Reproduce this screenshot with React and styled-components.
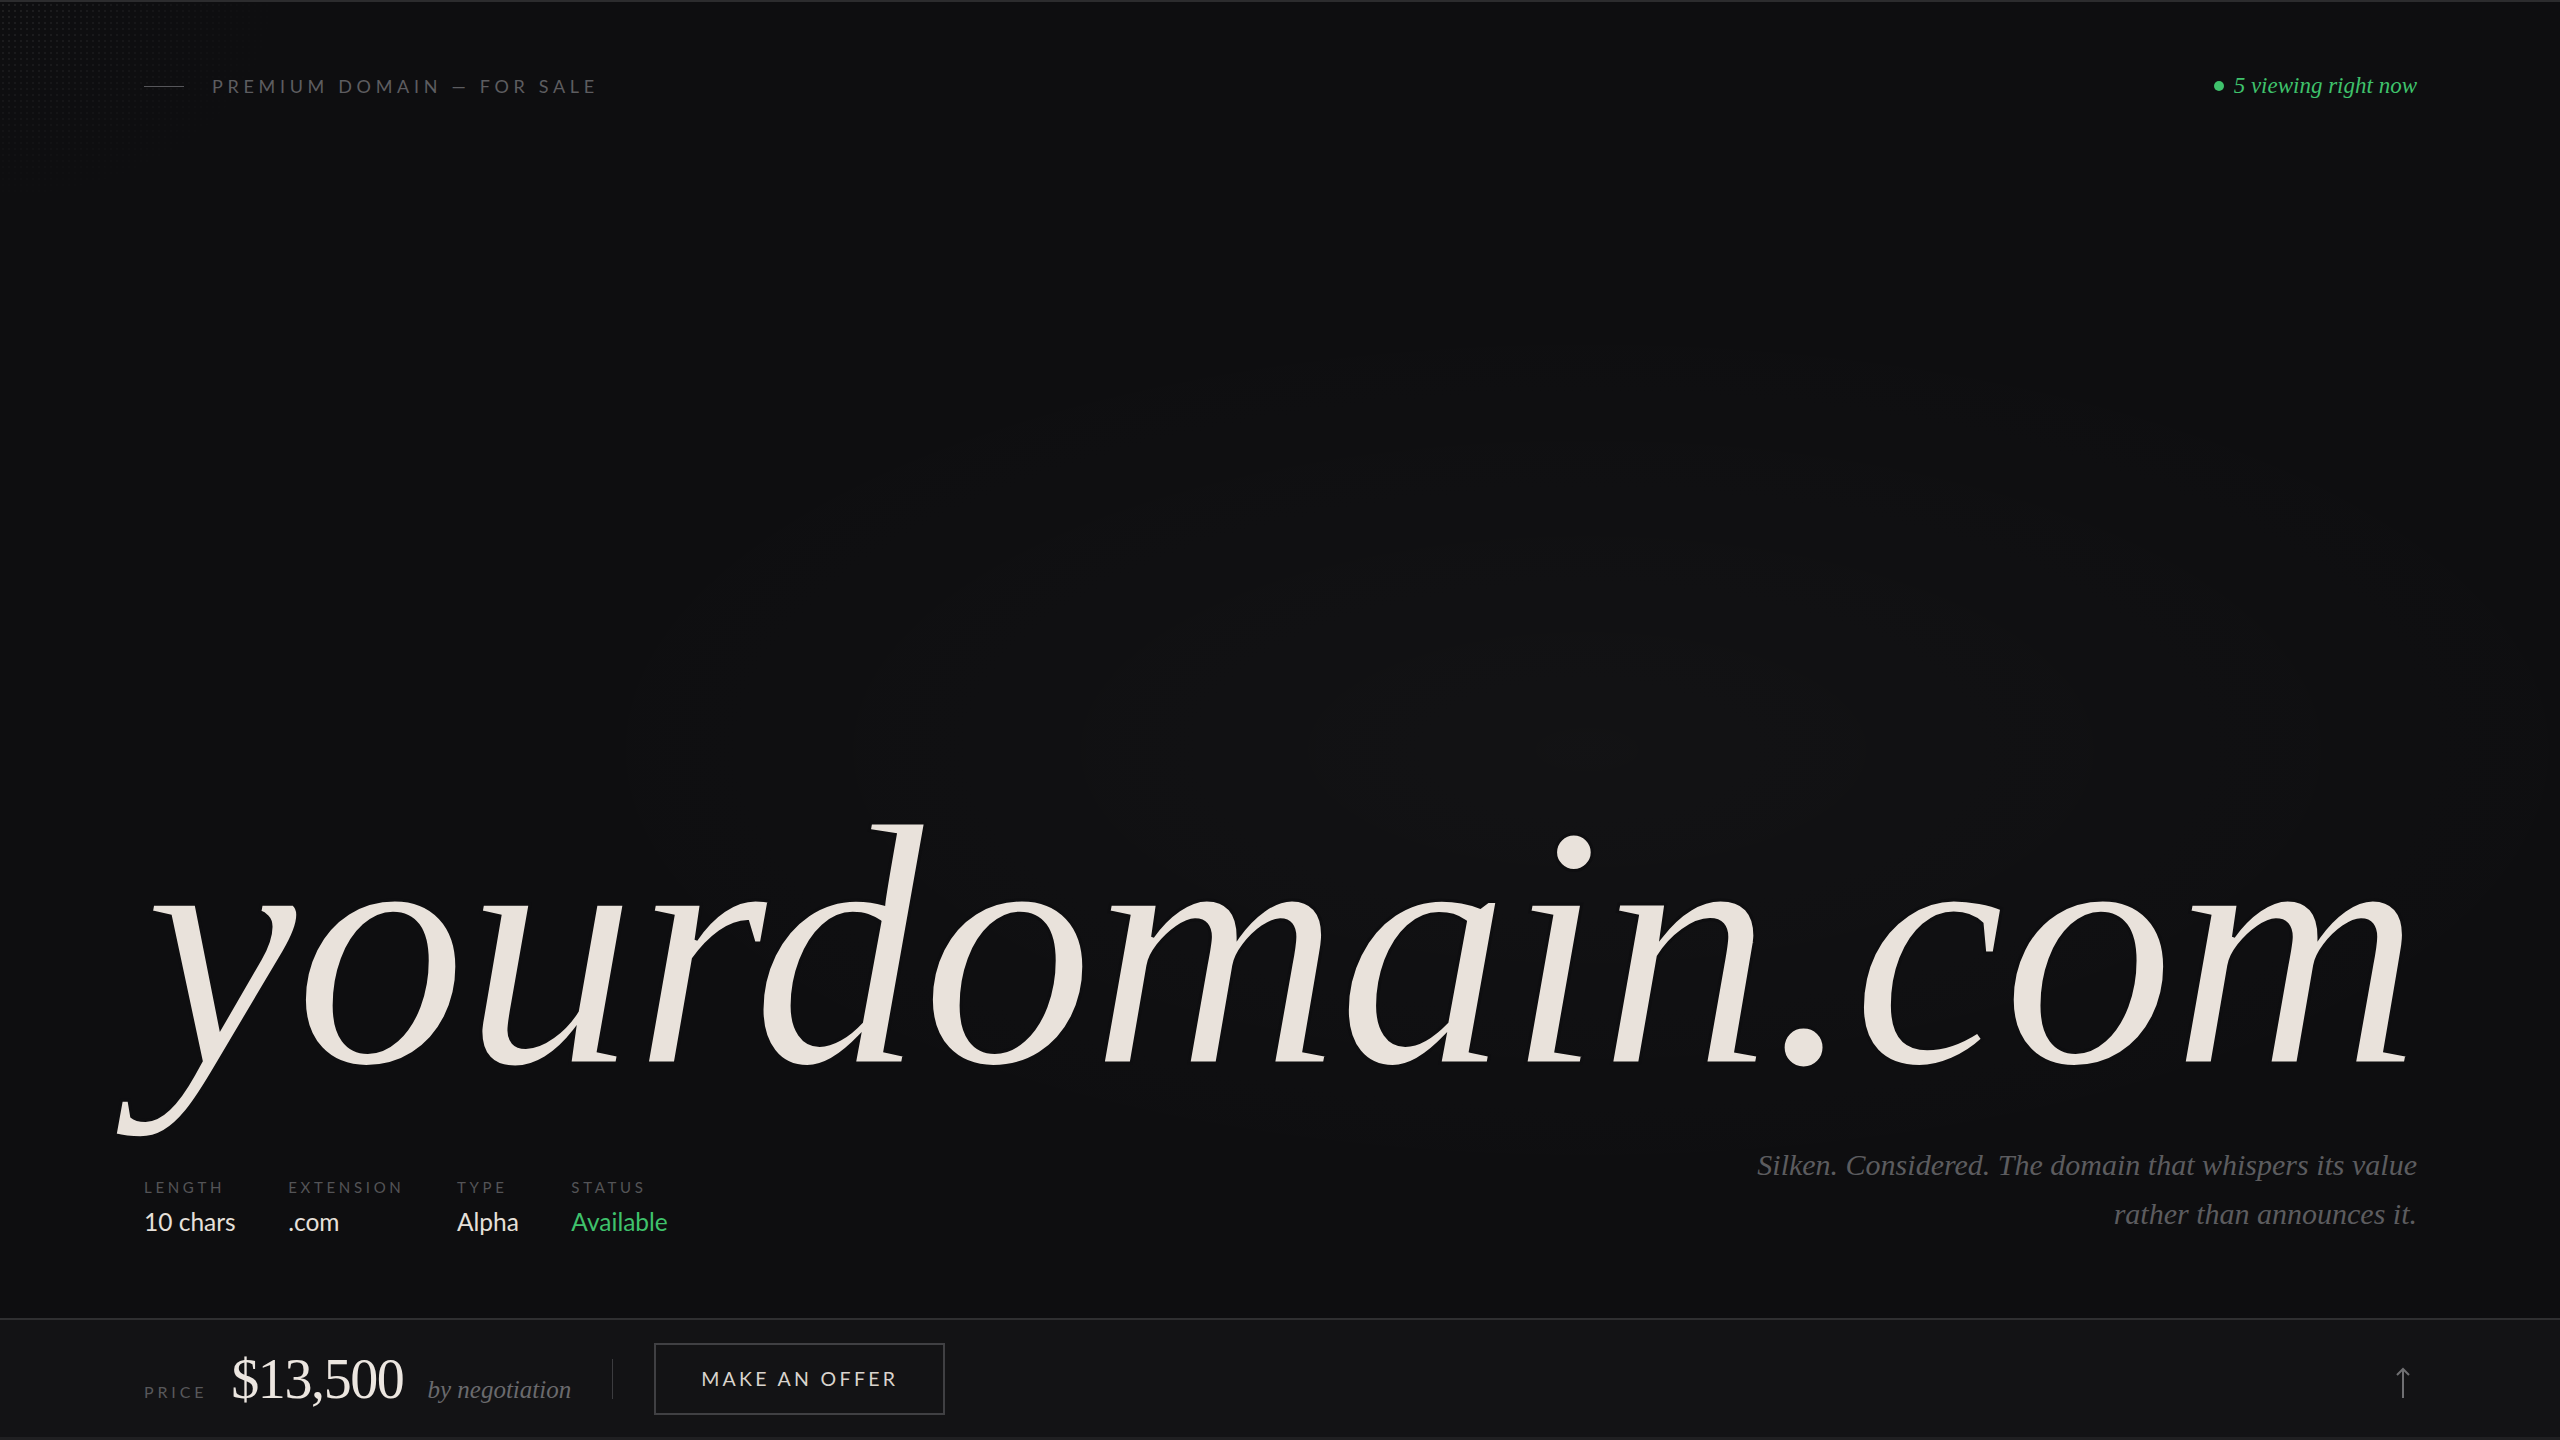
import React from "react";
import styled, { createGlobalStyle } from "styled-components";

const Global = createGlobalStyle`
  html, body { margin: 0; padding: 0; background: #0e0e10; }
  body { font-family: "Lato", "Noto Sans", sans-serif; }
  * { box-sizing: border-box; }
`;

const Page = styled.div`
  position: relative;
  width: 100%;
  height: 1440px;
  display: flex;
  flex-direction: column;
  overflow: hidden;
  background:
    radial-gradient(ellipse 60% 45% at 62% 52%, rgba(255,255,255,0.018), transparent 70%),
    #0e0e10;
  border-top: 2px solid #2c2c2e;
  &::before {
    content: "";
    position: absolute;
    left: 0; top: 0;
    width: 420px; height: 300px;
    background-image: radial-gradient(circle, rgba(255,255,255,0.07) 0.8px, transparent 1.2px);
    background-size: 6px 6px;
    -webkit-mask-image: radial-gradient(ellipse 100% 100% at 0 0, #000 0%, transparent 70%);
    mask-image: radial-gradient(ellipse 100% 100% at 0 0, #000 0%, transparent 70%);
    pointer-events: none;
  }
`;

const Main = styled.main`
  flex: 1;
  display: flex;
  flex-direction: column;
  justify-content: space-between;
  padding: 71px 143px 80px 144px;
`;

const Header = styled.header`
  display: flex;
  align-items: center;
  justify-content: space-between;
`;

const Eyebrow = styled.div`
  display: flex;
  align-items: center;
  gap: 28px;
  font-family: "Lato", "Noto Sans", sans-serif;
  font-size: 18px;
  letter-spacing: 0.26em;
  color: #5d5d60;
  text-transform: uppercase;
  line-height: 26px;
`;

const Dash = styled.span`
  display: block;
  width: 40px;
  height: 1px;
  background: #56565a;
`;

const Live = styled.div`
  display: flex;
  align-items: center;
  gap: 10px;
  font-family: "Liberation Serif", serif;
  font-style: italic;
  font-size: 23px;
  color: #3fc26c;
  line-height: 26px;
`;

const Dot = styled.span`
  width: 10px;
  height: 10px;
  border-radius: 50%;
  background: #3fc26c;
`;

const Hero = styled.section`
  display: flex;
  flex-direction: column;
`;

const Domain = styled.h1`
  margin: 0;
  font-family: "Liberation Serif", "Times New Roman", serif;
  font-style: italic;
  font-weight: 400;
  font-size: 346px;
  line-height: 1;
  letter-spacing: -0.01em;
  color: #e9e2db;
  -webkit-text-stroke: 3px #0e0e10;
  white-space: nowrap;
`;

const MetaRow = styled.div`
  display: flex;
  justify-content: space-between;
  align-items: flex-end;
  margin-top: 20px;
`;

const Stats = styled.dl`
  display: flex;
  gap: 52.5px;
  margin: 0;
`;

const Stat = styled.div`
  display: flex;
  flex-direction: column;
  gap: 8px;
`;

const Label = styled.dt`
  font-family: "Lato", "Noto Sans", sans-serif;
  font-size: 15px;
  letter-spacing: 0.245em;
  text-transform: uppercase;
  color: #545457;
  line-height: 22px;
`;

const Value = styled.dd`
  margin: 0;
  font-family: "Lato", "Noto Sans", sans-serif;
  font-size: 24.5px;
  line-height: 32px;
  color: ${(p) => (p.$accent ? "#3fc26c" : "#e6e0da")};
`;

const Tagline = styled.p`
  margin: 0;
  text-align: right;
  font-family: "Liberation Serif", serif;
  font-style: italic;
  font-size: 30px;
  line-height: 49px;
  color: #5c5c5f;
`;

const Bar = styled.footer`
  height: 122px;
  flex-shrink: 0;
  display: flex;
  align-items: center;
  justify-content: space-between;
  padding: 0 143px 0 144px;
  background: #131315;
  border-top: 2px solid #2f2f31;
  border-bottom: 3px solid #202022;
`;

const PriceGroup = styled.div`
  display: flex;
  align-items: center;
`;

const Price = styled.div`
  display: flex;
  align-items: baseline;
  gap: 24px;
`;

const PriceLabel = styled.span`
  font-family: "Lato", "Noto Sans", sans-serif;
  font-size: 16px;
  letter-spacing: 0.24em;
  color: #58585b;
  text-transform: uppercase;
`;

const Amount = styled.span`
  font-family: "Liberation Serif", serif;
  font-size: 56px;
  letter-spacing: -0.025em;
  color: #ece6e0;
  line-height: 1;
`;

const Terms = styled.span`
  font-family: "Liberation Serif", serif;
  font-style: italic;
  font-size: 25px;
  color: #6a6a6d;
`;

const Divider = styled.span`
  width: 1px;
  height: 40px;
  background: #3c3c3f;
  margin: 0 41px 0 41px;
`;

const OfferButton = styled.button`
  height: 72px;
  padding: 0 45px;
  background: transparent;
  border: 2px solid #404043;
  color: #d9d3cd;
  font-family: "Lato", "Noto Sans", sans-serif;
  font-size: 19.5px;
  letter-spacing: 0.17em;
  text-transform: uppercase;
  cursor: pointer;
`;

const UpButton = styled.button`
  background: transparent;
  border: 0;
  padding: 0;
  margin: 8px 6px 0 0;
  color: #6f6f72;
  display: flex;
  cursor: pointer;
`;

export default function App() {
  return (
    <>
      <Global />
      <Page>
        <Main>
          <Header>
            <Eyebrow>
              <Dash />
              Premium Domain — For Sale
            </Eyebrow>
            <Live>
              <Dot />5 viewing right now
            </Live>
          </Header>
          <Hero>
            <Domain>yourdomain.com</Domain>
            <MetaRow>
              <Stats>
                <Stat>
                  <Label>Length</Label>
                  <Value>10 chars</Value>
                </Stat>
                <Stat>
                  <Label>Extension</Label>
                  <Value>.com</Value>
                </Stat>
                <Stat>
                  <Label>Type</Label>
                  <Value>Alpha</Value>
                </Stat>
                <Stat>
                  <Label>Status</Label>
                  <Value $accent>Available</Value>
                </Stat>
              </Stats>
              <Tagline>
                Silken. Considered. The domain that whispers its value
                <br />
                rather than announces it.
              </Tagline>
            </MetaRow>
          </Hero>
        </Main>
        <Bar>
          <PriceGroup>
            <Price>
              <PriceLabel>Price</PriceLabel>
              <Amount>$13,500</Amount>
              <Terms>by negotiation</Terms>
            </Price>
            <Divider />
            <OfferButton>Make an Offer</OfferButton>
          </PriceGroup>
          <UpButton aria-label="Back to top">
            <svg width="16" height="32" viewBox="0 0 16 32" fill="none" stroke="currentColor" strokeWidth="2">
              <path d="M8 31V2" />
              <path d="M2 8l6-6 6 6" />
            </svg>
          </UpButton>
        </Bar>
      </Page>
    </>
  );
}
